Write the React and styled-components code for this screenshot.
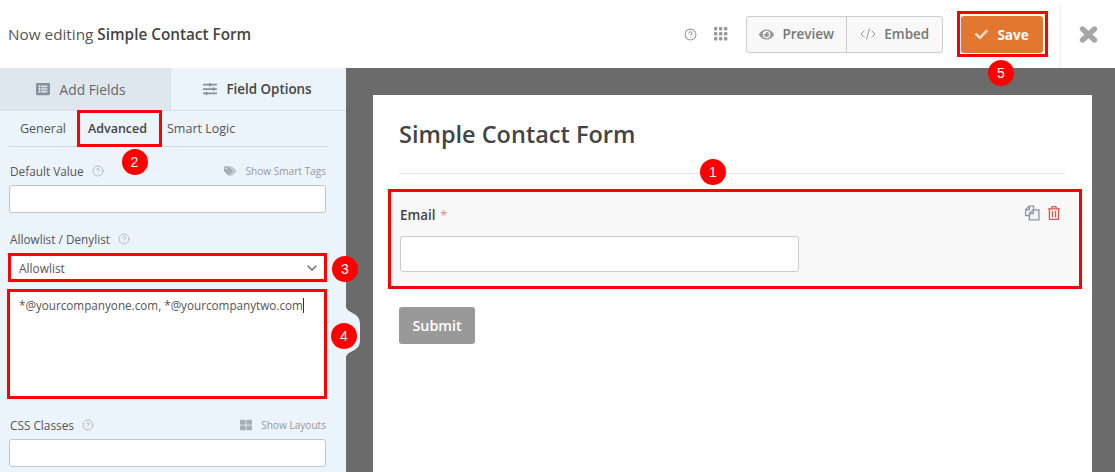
import React from 'react';
import styled, { createGlobalStyle, css } from 'styled-components';
import { FaCheck, FaEye, FaListAlt, FaRegTrashAlt, FaSlidersH, FaTags, FaThLarge } from 'react-icons/fa';
import { FiHelpCircle, FiChevronDown } from 'react-icons/fi';

const Global = createGlobalStyle`
  html, body { margin: 0; padding: 0; height: 472px; overflow: hidden; background: #fff; }
  body { font-family: "Open Sans", "Liberation Sans", sans-serif; color: #444; }
  * { box-sizing: border-box; }
`;

const Page = styled.div`
  position: relative;
  width: 1115px;
  height: 472px;
  overflow: hidden;
  display: flex;
  flex-direction: column;
`;
const Header = styled.header`
  height: 68px;
  flex: none;
  display: flex;
  align-items: center;
  background: #fff;
  padding-left: 8px;
`;
const HeaderTitle = styled.div`
  flex: 1;
  font-size: 15.3px;
  color: #555;
  b { font-weight: 600; color: #444; }
`;
const HelpBtn = styled.span`
  display: flex;
  color: #999;
`;
const Dots = styled.svg`
  width: 15px;
  height: 15px;
  margin-left: 17px;
  margin-right: 17px;
  fill: #999;
`;
const BtnGroup = styled.div`
  display: flex;
  width: 197px;
  height: 37px;
  border: 1px solid #ccc;
  border-radius: 3px;
  background: #f8f8f8;
`;
const GroupBtn = styled.div`
  width: ${(p) => p.$w}px;
  display: flex;
  align-items: center;
  justify-content: center;
  gap: 8px;
  font-size: 13.5px;
  font-weight: 600;
  color: #777;
  & + & { border-left: 1px solid #ccc; }
  svg { color: #999; }
`;
const SaveFrame = styled.div`
  margin-left: 14px;
  flex: none;
  width: 91px;
  height: 46px;
  border: 3px solid #f00;
  padding: 2px 2px 1px 1px;
`;
const SaveBtn = styled.div`
  height: 100%;
  display: flex;
  align-items: center;
  justify-content: center;
  gap: 9px;
  background: #e27730;
  border-radius: 3px;
  color: #fff;
  font-size: 13.5px;
  font-weight: 700;
  svg { color: #f6d9c5; }
`;
const CloseCell = styled.div`
  margin-left: 12px;
  width: 55px;
  flex: none;
  align-self: stretch;
  margin-top: 5px;
  border-left: 1px solid #eee;
  display: flex;
  align-items: center;
  justify-content: center;
  padding-bottom: 5px;
`;
const CloseIcon = styled.svg`
  width: 19px;
  height: 17px;
  fill: none;
  stroke: #a6a6a6;
  stroke-width: 5.4;
  stroke-linecap: round;
`;
const Body = styled.div`
  flex: 1;
  display: flex;
  min-height: 0;
`;
const Sidebar = styled.aside`
  width: 346px;
  flex: none;
  background: #ebf3fb;
  position: relative;
`;
const TabBar = styled.div`
  display: flex;
  height: 43px;
  border-bottom: 1px solid #d6dfe7;
`;
const MainTab = styled.div`
  width: ${(p) => p.$w}px;
  display: flex;
  align-items: center;
  justify-content: center;
  gap: 9px;
  padding-right: ${(p) => (p.$active ? 2 : 8)}px;
  font-size: ${(p) => (p.$active ? 13.4 : 13.8)}px;
  font-weight: ${(p) => (p.$active ? 600 : 400)};
  color: ${(p) => (p.$active ? '#444' : '#666')};
  background: ${(p) => (p.$active ? '#ebf3fb' : '#dfe7ee')};
  & + & { border-left: 1px solid #d6dfe7; }
  svg { color: #86919e; font-size: 14px; }
`;
const SubTabs = styled.div`
  display: flex;
  height: 36px;
  margin: 0 18px 0 9px;
  border-bottom: 1px solid #ced7e0;
  align-items: center;
  padding-left: 11px;
  font-size: 12.5px;
`;
const SubTab = styled.div`
  color: ${(p) => (p.$active ? '#444' : '#555')};
  font-weight: ${(p) => (p.$active ? 600 : 400)};
  height: 100%;
  display: flex;
  align-items: center;
  ${(p) => p.$active && css`
    flex: none;
    width: 81px;
    margin: -1px 7px 0 13px;
    padding-right: 4px;
    justify-content: center;
    outline: 3px solid #f00;
    outline-offset: -1px;
    height: 33px;
  `}
`;
const Fields = styled.div`
  padding: 16px 20px 0 9px;
`;
const Field = styled.div`
  margin-bottom: ${(p) => p.$mb ?? 18}px;
`;
const LabelRow = styled.div`
  display: flex;
  align-items: center;
  height: 16px;
  padding-left: 1px;
  margin-bottom: 6px;
  font-size: 11.8px;
  color: #555;
`;
const LabelHelp = styled.span`
  display: flex;
  margin-left: 8px;
  color: #bbb;
`;
const LabelLink = styled.span`
  margin-left: auto;
  display: flex;
  align-items: center;
  gap: 9px;
  font-size: 10.1px;
  color: #999;
  svg { color: #a6aeb8; font-size: 12px; }
`;
const TextBox = styled.div`
  width: 317px;
  height: 28px;
  background: #fff;
  border: 1px solid #bfc6cd;
  border-radius: 3px;
`;
const SelectBox = styled.div`
  width: 317px;
  height: 27px;
  margin-top: 7px;
  background: #fff;
  display: flex;
  align-items: center;
  justify-content: space-between;
  padding: 0 6px 0 10px;
  font-size: 11.9px;
  color: #555;
  outline: 3px solid #f00;
  outline-offset: -2px;
  svg { color: #666; }
`;
const AreaBox = styled.div`
  width: 318px;
  height: 108px;
  margin: 9px 0 19px -1px;
  background: #fff;
  padding: 6px 11px;
  font-size: 11.7px;
  color: #555;
  outline: 3px solid #f00;
  outline-offset: -2px;
  line-height: 18px;
`;
const Caret = styled.span`
  display: inline-block;
  width: 1px;
  height: 15px;
  background: #333;
  vertical-align: -3px;
`;
const Canvas = styled.main`
  flex: 1;
  background: #6b6b6b;
  padding: 27px 23px 0 27px;
  min-width: 0;
`;
const FormPanel = styled.section`
  background: #fff;
  height: 100%;
  padding: 21px 27px 0 26px;
`;
const FormTitle = styled.h1`
  margin: 0;
  font-size: 23.5px;
  line-height: 36px;
  font-weight: 600;
  color: #444;
  padding-bottom: 21px;
  border-bottom: 1px solid #e4e4e4;
`;
const FieldCard = styled.div`
  position: relative;
  width: 690px;
  height: 96px;
  margin: 17px 0 0 -9px;
  background: #f8f8f8;
  padding: 13px 9px;
  border: 1px dashed #ccc;
  outline: 3px solid #f00;
  outline-offset: -1px;
`;
const FieldLabel = styled.div`
  font-size: 13.4px;
  font-weight: 600;
  line-height: 20px;
  color: #444;
  span { color: #e58a8a; font-weight: 400; margin-left: 1px; }
`;
const FieldActions = styled.div`
  position: absolute;
  top: 13px;
  right: 18px;
  display: flex;
  gap: 7px;
  align-items: center;
  svg:first-child { color: #8a949c; }
  svg:last-child { color: #d9534f; font-size: 14px; }
`;
const FieldInput = styled.div`
  width: 399px;
  height: 36px;
  margin-top: 11px;
  background: #fff;
  border: 1px solid #ccc;
  border-radius: 3px;
`;
const SubmitBtn = styled.div`
  width: 76px;
  height: 37px;
  margin-top: 20px;
  background: #999;
  border-radius: 3px;
  color: #fff;
  display: flex;
  align-items: center;
  justify-content: center;
  font-size: 14.3px;
  font-weight: 600;
`;
const Toggle = styled.svg`
  position: absolute;
  left: 346px;
  top: 307px;
  width: 14px;
  height: 50px;
`;
const Badge = styled.div`
  position: absolute;
  left: ${(p) => p.$x - 13}px;
  top: ${(p) => p.$y - 13}px;
  width: 26px;
  height: 26px;
  border-radius: 50%;
  background: #f00;
  color: #fff;
  display: flex;
  align-items: center;
  justify-content: center;
  font-family: "Liberation Sans", sans-serif;
  font-size: 14px;
  z-index: 5;
`;

const DOTS = [1, 6, 11];

function Help({ size = 13 }) {
  return <FiHelpCircle size={size} />;
}

function DuplicateIcon() {
  return (
    <svg width="16" height="16" viewBox="0 0 15 15" fill="none" stroke="currentColor" strokeWidth="1.200">
      <path d="M5 1h4v3M5 1L1.500 4.500V10H5" />
      <path d="M5 1v3.500H1.500" />
      <path d="M8.500 4.500h5.500v9.500H5V8z" fill="#eef3f8" />
      <path d="M8.500 4.500V8H5" />
    </svg>
  );
}

function CodeIcon() {
  return (
    <svg width="16" height="12" viewBox="0 0 16 12" fill="none" stroke="#999" strokeWidth="1">
      <path d="M4.500 2.500L1 6l3.500 3.500M11.500 2.500L15 6l-3.500 3.500M9.500 0.500L6.500 11.500" />
    </svg>
  );
}

export default function App() {
  return (
    <Page>
      <Global />
      <Header>
        <HeaderTitle>Now editing <b>Simple Contact Form</b></HeaderTitle>
        <HelpBtn><Help size={13} /></HelpBtn>
        <Dots viewBox="0 0 15 15">
          {DOTS.map((y) => DOTS.map((x) => <rect key={`${x}-${y}`} x={x - 1} y={y - 1} width="3.400" height="3.400" rx="1" />))}
        </Dots>
        <BtnGroup>
          <GroupBtn $w={100}><FaEye size={15} />Preview</GroupBtn>
          <GroupBtn $w={96}><CodeIcon />Embed</GroupBtn>
        </BtnGroup>
        <SaveFrame><SaveBtn><FaCheck size={13} />Save</SaveBtn></SaveFrame>
        <CloseCell>
          <CloseIcon viewBox="0 0 19 17"><path d="M3.500 3L15.500 14M15.500 3L3.500 14" /></CloseIcon>
        </CloseCell>
      </Header>
      <Body>
        <Sidebar>
          <TabBar>
            <MainTab $w={170}><FaListAlt />Add Fields</MainTab>
            <MainTab $w={176} $active><FaSlidersH />Field Options</MainTab>
          </TabBar>
          <SubTabs>
            <SubTab>General</SubTab>
            <SubTab $active>Advanced</SubTab>
            <SubTab>Smart Logic</SubTab>
          </SubTabs>
          <Fields>
            <Field>
              <LabelRow>Default Value<LabelHelp><Help size={12} /></LabelHelp><LabelLink><FaTags />Show Smart Tags</LabelLink></LabelRow>
              <TextBox />
            </Field>
            <Field $mb={0}>
              <LabelRow>Allowlist / Denylist<LabelHelp><Help size={12} /></LabelHelp></LabelRow>
              <SelectBox>Allowlist<FiChevronDown size={16} /></SelectBox>
              <AreaBox>*@yourcompanyone.com, *@yourcompanytwo.com<Caret /></AreaBox>
            </Field>
            <Field>
              <LabelRow>CSS Classes<LabelHelp><Help size={12} /></LabelHelp><LabelLink><FaThLarge />Show Layouts</LabelLink></LabelRow>
              <TextBox />
            </Field>
          </Fields>
        </Sidebar>
        <Canvas>
          <FormPanel>
            <FormTitle>Simple Contact Form</FormTitle>
            <FieldCard>
              <FieldLabel>Email <span>*</span></FieldLabel>
              <FieldActions><DuplicateIcon /><FaRegTrashAlt /></FieldActions>
              <FieldInput />
            </FieldCard>
            <SubmitBtn>Submit</SubmitBtn>
          </FormPanel>
        </Canvas>
      </Body>
      <Toggle viewBox="0 0 14 50">
        <path d="M0 0C2 7 14 5 14 17V33C14 45 2 43 0 50Z" fill="#ebf3fb" />
      </Toggle>
      <Badge $x={713} $y={172}>1</Badge>
      <Badge $x={134.5} $y={162}>2</Badge>
      <Badge $x={345} $y={269}>3</Badge>
      <Badge $x={344} $y={336}>4</Badge>
      <Badge $x={1001} $y={73}>5</Badge>
    </Page>
  );
}
